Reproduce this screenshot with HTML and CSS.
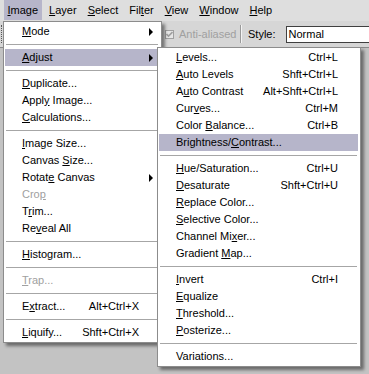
FILE: index.html
```html
<!DOCTYPE html>
<html lang="en">
<head>
    <meta charset="UTF-8">
    <title>Image menu</title>
    <link rel="stylesheet" href="styles.css">
</head>
<body>
    <div class="screen">
        <div class="menubar">
            <span class="top-item open"><u>I</u>mage</span>
            <span class="top-item"><u>L</u>ayer</span>
            <span class="top-item"><u>S</u>elect</span>
            <span class="top-item">Fil<u>t</u>er</span>
            <span class="top-item"><u>V</u>iew</span>
            <span class="top-item"><u>W</u>indow</span>
            <span class="top-item"><u>H</u>elp</span>
        </div>

        <div class="options">
            <span class="grip"></span>
            <span class="hidden-tools"></span>
            <span class="check">
                <span class="box">
                    <svg width="7" height="7" viewBox="0 0 7 7"><path d="M0.5 3 L2.5 5 L6.5 1" fill="none" stroke="#a0a0a0" stroke-width="1.6"/></svg>
                </span>
                Anti-aliased
            </span>
            <span class="divider"></span>
            <span class="label">Style:</span>
            <span class="select">Normal</span>
        </div>

        <ul class="menu menu-image">
            <li class="item sub"><span><u>M</u>ode</span></li>
            <li class="sep"></li>
            <li class="item sub active"><span><u>A</u>djust</span></li>
            <li class="sep"></li>
            <li class="item"><span><u>D</u>uplicate...</span></li>
            <li class="item"><span>Appl<u>y</u> Image...</span></li>
            <li class="item"><span><u>C</u>alculations...</span></li>
            <li class="sep"></li>
            <li class="item"><span><u>I</u>mage Size...</span></li>
            <li class="item"><span>Canvas <u>S</u>ize...</span></li>
            <li class="item sub"><span>Rotat<u>e</u> Canvas</span></li>
            <li class="item disabled"><span>Cro<u>p</u></span></li>
            <li class="item"><span>T<u>r</u>im...</span></li>
            <li class="item"><span>Re<u>v</u>eal All</span></li>
            <li class="sep"></li>
            <li class="item"><span><u>H</u>istogram...</span></li>
            <li class="sep"></li>
            <li class="item disabled"><span><u>T</u>rap...</span></li>
            <li class="sep"></li>
            <li class="item"><span>E<u>x</u>tract...</span><span>Alt+Ctrl+X</span></li>
            <li class="sep"></li>
            <li class="item"><span><u>L</u>iquify...</span><span>Shft+Ctrl+X</span></li>
        </ul>

        <ul class="menu menu-adjust">
            <li class="item"><span><u>L</u>evels...</span><span>Ctrl+L</span></li>
            <li class="item"><span><u>A</u>uto Levels</span><span>Shft+Ctrl+L</span></li>
            <li class="item"><span>A<u>u</u>to Contrast</span><span>Alt+Shft+Ctrl+L</span></li>
            <li class="item"><span>Cur<u>v</u>es...</span><span>Ctrl+M</span></li>
            <li class="item"><span>Color <u>B</u>alance...</span><span>Ctrl+B</span></li>
            <li class="item active"><span>Brightness/<u>C</u>ontrast...</span></li>
            <li class="sep"></li>
            <li class="item"><span><u>H</u>ue/Saturation...</span><span>Ctrl+U</span></li>
            <li class="item"><span><u>D</u>esaturate</span><span>Shft+Ctrl+U</span></li>
            <li class="item"><span><u>R</u>eplace Color...</span></li>
            <li class="item"><span><u>S</u>elective Color...</span></li>
            <li class="item"><span>Channel Mi<u>x</u>er...</span></li>
            <li class="item"><span>Gradient <u>M</u>ap...</span></li>
            <li class="sep"></li>
            <li class="item"><span><u>I</u>nvert</span><span>Ctrl+I</span></li>
            <li class="item"><span><u>E</u>qualize</span></li>
            <li class="item"><span><u>T</u>hreshold...</span></li>
            <li class="item"><span><u>P</u>osterize...</span></li>
            <li class="sep"></li>
            <li class="item"><span>Variations...</span></li>
        </ul>
    </div>
</body>
</html>
```

FILE: styles.css
```css
body {
    margin: 0;
    font-family: "Liberation Sans", Arial, sans-serif;
    font-size: 11px;
    color: #000;
}

.screen {
    position: relative;
    width: 369px;
    height: 374px;
    background: #c3c3c3;
    overflow: hidden;
}

/* top menu bar */
.menubar {
    display: flex;
    height: 21px;
    padding-left: 2px;
    background: #dedede;
}

.top-item {
    padding: 0 4px;
    margin: 0 1.5px;
    line-height: 20px;
    height: 20px;
}

.top-item.open {
    background: #b6b5ca;
}

/* tool options bar, mostly hidden behind the menus */
.options {
    display: flex;
    align-items: center;
    height: 26px;
    background: #d6d6d6;
    border-bottom: 1px solid #8a8a8a;
}

.grip {
    width: 2px;
    height: 18px;
    margin-left: 1px;
    border-left: 1px dotted #555;
}

.hidden-tools {
    width: 161px;
}

.check {
    display: flex;
    align-items: center;
    gap: 5px;
    color: #a0a0a0;
    width: 75px;
}

.check .box {
    width: 7px;
    height: 7px;
    border: 1px solid #a0a0a0;
    background: #e6e6e6;
    display: flex;
}

.divider {
    width: 1px;
    height: 18px;
    background: #9a9a9a;
    border-right: 1px solid #f4f4f4;
    margin-right: 6px;
}

.label {
    margin-right: 10px;
}

.select {
    flex: 1;
    height: 15px;
    line-height: 15px;
    padding-left: 2px;
    background: #fff;
    border: 1px solid #404040;
    border-right: none;
}

/* drop-down menus */
.menu {
    position: absolute;
    margin: 0;
    padding: 1px 2px 1px 1px;
    list-style: none;
    background: #fff;
    border: 1px solid #8c8c8c;
    box-shadow: 3px 3px 3px rgba(0, 0, 0, 0.45);
    box-sizing: border-box;
}

.menu-image {
    left: 3px;
    top: 21px;
    width: 159px;
}

.menu-adjust {
    left: 157px;
    top: 47px;
    width: 204px;
}

.item {
    position: relative;
    display: flex;
    justify-content: space-between;
    height: 17px;
    line-height: 17px;
    padding: 0 20px 0 17px;
    white-space: nowrap;
}

.item.active {
    background: #b6b5ca;
}

.item.disabled {
    color: #a0a0a0;
}

.item.sub::after {
    content: "";
    position: absolute;
    right: 6px;
    top: 5px;
    border-left: 4px solid #000;
    border-top: 4px solid transparent;
    border-bottom: 4px solid transparent;
}

.sep {
    position: relative;
    height: 9px;
}

.sep::after {
    content: "";
    position: absolute;
    left: 1px;
    right: 1px;
    top: 4px;
    border-top: 1px solid #a6a6a6;
}
```
